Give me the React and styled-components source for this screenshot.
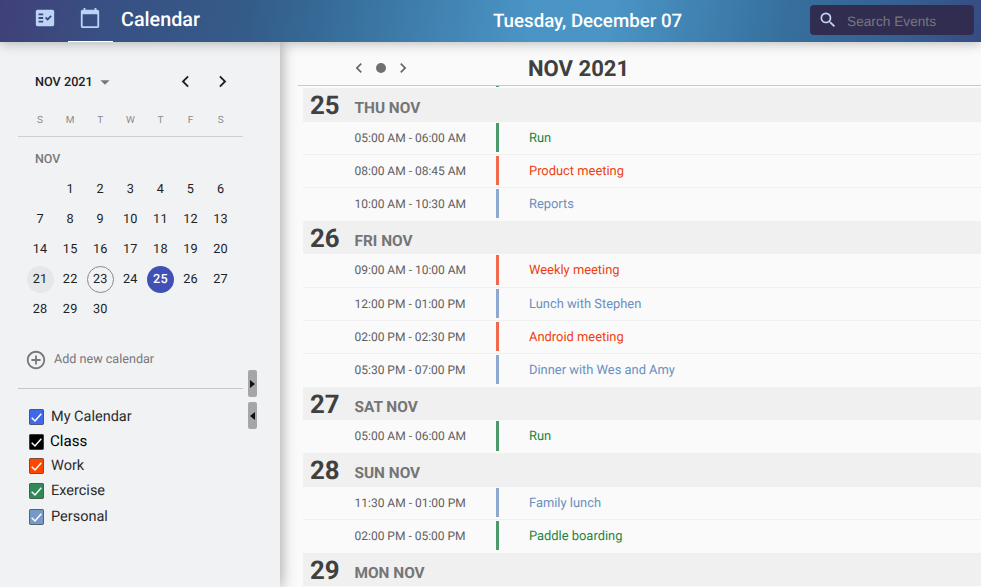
import React from 'react';
import styled, { createGlobalStyle } from 'styled-components';
import {
	MdFactCheck,
	MdCalendarToday,
	MdSearch,
	MdArrowDropDown,
	MdChevronLeft,
	MdChevronRight,
	MdAddCircleOutline,
} from 'react-icons/md';

const GlobalStyle = createGlobalStyle`
	* {
		box-sizing: border-box;
	}

	body {
		margin: 0;
		font-family: Roboto, sans-serif;
		text-rendering: geometricPrecision;
		background-color: #fafafa;
		overflow: hidden;
	}

	svg {
		display: block;
		flex-shrink: 0;
	}
`;

const colors = {
	personal: '#6a8fc0',
	work: '#ee3f10',
	exercise: '#1c8542',
};

const barColors = {
	personal: '#8ea8cf',
	work: '#f0694a',
	exercise: '#4c9a6b',
};

const Page = styled.div`
	display: flex;
	flex-direction: column;
	height: 100vh;
`;

const Header = styled.header`
	position: relative;
	z-index: 2;
	flex: none;
	height: 42px;
	display: grid;
	grid-template-columns: 404px 1fr 171px;
	background: linear-gradient(
		100deg,
		#404079 0%,
		#385083 11%,
		#345b89 25%,
		#366b97 33%,
		#4a95c6 54%,
		#4a95c6 62%,
		#366f9d 80%,
		#355f90 92%,
		#384b83 100%
	);
	box-shadow: 0 1px 12px rgb(0 0 0 / 28%);
	color: #fff;
`;

const Nav = styled.nav`
	display: flex;
	padding-left: 23px;
`;

const NavTab = styled.a`
	width: 45px;
	height: 42px;
	display: flex;
	justify-content: center;
	padding: 7px 1px 0 0;
	color: #bcd4f5;
	border-bottom: 1px solid ${(props) => (props.$active ? '#fff' : 'transparent')};
`;

const AppTitle = styled.h1`
	margin: 0 0 0 8px;
	font-size: 19.8px;
	font-weight: 500;
	line-height: 39px;
`;

const Today = styled.div`
	padding-left: 89px;
	font-size: 18.7px;
	font-weight: 500;
	line-height: 42px;
	white-space: nowrap;
`;

const Search = styled.label`
	width: 164px;
	height: 30px;
	margin-top: 5px;
	padding-left: 8px;
	display: flex;
	align-items: center;
	gap: 9px;
	border-radius: 4px;
	background-color: #312d50;
	color: #c5d3f5;
	font: 13.7px 'Liberation Sans', sans-serif;

	& > span {
		padding-top: 2px;
		color: #777680;
	}
`;

const Body = styled.div`
	flex: 1;
	min-height: 0;
	display: flex;
`;

const Sidebar = styled.aside`
	position: relative;
	z-index: 1;
	flex: none;
	width: 280px;
	background-color: #f1f2f4;
	box-shadow: 1px 0 14px rgb(0 0 0 / 36%);
	display: flex;
`;

const SidebarMain = styled.div`
	width: 225px;
	margin-left: 18px;
`;

const MonthPicker = styled.div`
	height: 62px;
	padding: 17px 9px 0 17px;
	display: flex;
	align-items: center;
	font-size: 12.7px;
	font-weight: 500;
	color: #202124;

	& > span {
		padding-top: 1px;
	}
`;

const MonthArrows = styled.div`
	display: flex;
	gap: 14px;
	margin-left: auto;
`;

const Caret = styled(MdArrowDropDown)`
	color: #777;
	margin-left: 1px;
`;

const DayGrid = styled.div`
	display: grid;
	grid-template-columns: repeat(7, 30.1px);
	justify-items: center;
	padding-left: 7px;
`;

const WeekDays = styled(DayGrid)`
	height: 33px;
	border-bottom: 1px solid #cfcfd1;
	color: #8b8b8e;
	font-size: 10px;
	line-height: 33px;
`;

const MonthLabel = styled.div`
	height: 37px;
	padding-left: 17px;
	font-size: 12.5px;
	font-weight: 500;
	line-height: 46px;
	color: #77787b;
`;

const Days = styled(DayGrid)`
	grid-auto-rows: 30px;
	align-items: center;
`;

const Day = styled.div`
	width: 27px;
	height: 27px;
	border-radius: 50%;
	text-align: center;
	font-size: 12.7px;
	line-height: 25px;
	letter-spacing: 0.2px;
	color: ${(props) => (props.$selected ? '#fff' : '#202124')};
	font-weight: ${(props) => (props.$selected ? 500 : 400)};
	background-color: ${(props) =>
		props.$selected ? '#3f51b5' : props.$hovered ? '#e6e7e8' : 'transparent'};
	border: 1px solid ${(props) => (props.$outlined ? '#8a8a8d' : 'transparent')};
`;

const AddCalendar = styled.div`
	height: 65px;
	display: flex;
	align-items: center;
	gap: 7px;
	padding: 7px 0 0 7px;
	border-bottom: 1px solid #c6c6c8;
	color: #77787b;
	font-size: 12.6px;

	& > span {
		padding-bottom: 1px;
	}
`;

const CalendarList = styled.ul`
	list-style: none;
	margin: 0;
	padding: 15px 0 0 11px;
`;

const CalendarItem = styled.li`
	height: 24.9px;
	display: flex;
	align-items: center;
	gap: ${(props) => (props.$dark ? '6px' : '7px')};
	font-size: ${(props) => (props.$dark ? '15.1px' : '14.5px')};
	color: ${(props) => (props.$dark ? '#000' : '#2b2b2d')};

	& > svg {
		margin-top: 2px;
	}

	&:nth-child(3),
	&:nth-child(4) {
		margin: -1px 0 1px;
	}
`;

const Handles = styled.div`
	margin: 328px 0 0 5px;
	display: flex;
	flex-direction: column;
	gap: 5px;
`;

const Handle = styled.div`
	width: 9px;
	height: 27px;
	border-radius: 2px;
	background-color: #a6a6a6;
	display: grid;
	place-content: center;
`;

const Schedule = styled.main`
	flex: 1;
	min-width: 0;
	padding-left: 18px;
`;

const Toolbar = styled.div`
	height: 44px;
	display: flex;
	align-items: center;
	padding: 8px 0 0 51px;
	border-bottom: 1px solid #c9c9c9;
	color: #666;
`;

const Dot = styled.span`
	width: 10px;
	height: 10px;
	margin: 0 7px;
	border-radius: 50%;
	background-color: #707070;
`;

const Month = styled.h2`
	margin: 0 0 0 115px;
	padding-top: 2px;
	font-size: 22.1px;
	font-weight: 700;
	line-height: 26px;
	color: #404040;
`;

const Agenda = styled.div`
	padding-left: 5px;
`;

// tail of the entry scrolled under the toolbar
const Clipped = styled.div`
	height: 2.4px;
	padding-left: 193px;

	&::before {
		content: '';
		display: block;
		width: 3px;
		height: 1px;
		background-color: ${barColors.exercise};
	}
`;

const DayHeader = styled.div`
	height: 33.2px;
	display: grid;
	grid-template-columns: 51.5px 1fr;
	background-color: #f0f0f0;
	color: #757575;
	font-size: 15.4px;
	font-weight: 700;
	line-height: 41px;
	white-space: nowrap;

	& > strong {
		padding-left: 7px;
		font-size: 25.8px;
		font-weight: 700;
		line-height: 36px;
		color: #404040;
	}
`;

const Event = styled.div`
	height: 33.2px;
	display: grid;
	grid-template-columns: 141.5px 3px 1fr;
	padding-left: 51.5px;
	font-size: 12px;
	line-height: 33px;
	color: #606060;
	border-bottom: 1px solid ${(props) => (props.$last ? 'transparent' : '#f0f0f0')};
`;

const EventBar = styled.span`
	height: 29.5px;
	margin-top: 1px;
	background-color: ${(props) => barColors[props.$type]};
`;

const EventTitle = styled.span`
	padding-left: 30px;
	font-size: 12.9px;
	color: ${(props) => colors[props.$type]};
`;

const calendars = [
	{ name: 'My Calendar', color: '#4068e8' },
	{ name: 'Class', color: '#000' },
	{ name: 'Work', color: '#ff4500' },
	{ name: 'Exercise', color: '#2e8b57' },
	{ name: 'Personal', color: '#7599c8' },
];

const agenda = [
	{
		day: 25,
		label: 'THU NOV',
		events: [
			['05:00 AM - 06:00 AM', 'Run', 'exercise'],
			['08:00 AM - 08:45 AM', 'Product meeting', 'work'],
			['10:00 AM - 10:30 AM', 'Reports', 'personal'],
		],
	},
	{
		day: 26,
		label: 'FRI NOV',
		events: [
			['09:00 AM - 10:00 AM', 'Weekly meeting', 'work'],
			['12:00 PM - 01:00 PM', 'Lunch with Stephen', 'personal'],
			['02:00 PM - 02:30 PM', 'Android meeting', 'work'],
			['05:30 PM - 07:00 PM', 'Dinner with Wes and Amy', 'personal'],
		],
	},
	{
		day: 27,
		label: 'SAT NOV',
		events: [['05:00 AM - 06:00 AM', 'Run', 'exercise']],
	},
	{
		day: 28,
		label: 'SUN NOV',
		events: [
			['11:30 AM - 01:00 PM', 'Family lunch', 'personal'],
			['02:00 PM - 05:00 PM', 'Paddle boarding', 'exercise'],
		],
	},
	{ day: 29, label: 'MON NOV', events: [] },
];

function Checkbox({ color }) {
	return (
		<svg width='15' height='16' viewBox='0 0 15 16'>
			<rect x='0.5' y='0.5' width='14' height='15' rx='0.8' fill={color} stroke='#000' strokeOpacity='0.5' />
			<path d='M2.7 8.8 6 12 12.3 4.8' fill='none' stroke='#fff' strokeWidth='1.5' />
		</svg>
	);
}

export default function App() {
	return (
		<Page>
			<GlobalStyle />
			<Header>
				<Nav>
					<NavTab>
						<MdFactCheck size={22} />
					</NavTab>
					<NavTab $active>
						<MdCalendarToday size={22} />
					</NavTab>
					<AppTitle>Calendar</AppTitle>
				</Nav>
				<Today>Tuesday, December 07</Today>
				<Search>
					<MdSearch size={20} />
					<span>Search Events</span>
				</Search>
			</Header>
			<Body>
				<Sidebar>
					<SidebarMain>
						<MonthPicker>
							<span>NOV 2021</span>
							<Caret size={22} />
							<MonthArrows>
								<MdChevronLeft size={23} />
								<MdChevronRight size={23} />
							</MonthArrows>
						</MonthPicker>
						<WeekDays>
							{['S', 'M', 'T', 'W', 'T', 'F', 'S'].map((name, i) => (
								<span key={i}>{name}</span>
							))}
						</WeekDays>
						<MonthLabel>NOV</MonthLabel>
						<Days>
							<span />
							{Array.from({ length: 30 }, (_, i) => i + 1).map((day) => (
								<Day
									key={day}
									$hovered={day === 21}
									$outlined={day === 23}
									$selected={day === 25}
								>
									{day}
								</Day>
							))}
						</Days>
						<AddCalendar>
							<MdAddCircleOutline size={22} />
							<span>Add new calendar</span>
						</AddCalendar>
						<CalendarList>
							{calendars.map(({ name, color }) => (
								<CalendarItem key={name} $dark={name === 'Class'}>
									<Checkbox color={color} />
									{name}
								</CalendarItem>
							))}
						</CalendarList>
					</SidebarMain>
					<Handles>
						<Handle>
							<svg width='5' height='8' viewBox='0 0 5 8'>
								<path d='M0 0 5 4 0 8z' fill='#111' />
							</svg>
						</Handle>
						<Handle>
							<svg width='5' height='8' viewBox='0 0 5 8'>
								<path d='M5 0 0 4 5 8z' fill='#111' />
							</svg>
						</Handle>
					</Handles>
				</Sidebar>
				<Schedule>
					<Toolbar>
						<MdChevronLeft size={20} />
						<Dot />
						<MdChevronRight size={20} />
						<Month>NOV 2021</Month>
					</Toolbar>
					<Agenda>
						<Clipped />
						{agenda.map(({ day, label, events }) => (
							<React.Fragment key={day}>
								<DayHeader>
									<strong>{day}</strong>
									{label}
								</DayHeader>
								{events.map(([time, title, type], i) => (
									<Event key={time} $last={i === events.length - 1}>
										{time}
										<EventBar $type={type} />
										<EventTitle $type={type}>{title}</EventTitle>
									</Event>
								))}
							</React.Fragment>
						))}
					</Agenda>
				</Schedule>
			</Body>
		</Page>
	);
}
